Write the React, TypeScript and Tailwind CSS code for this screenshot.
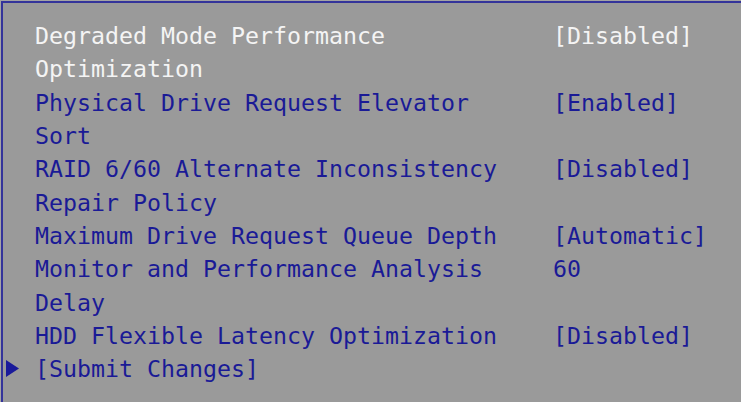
import React from 'react';

type Setting = {
  label: string;
  value?: string;
  selected?: boolean;
  action?: boolean;
};

const settings: Setting[] = [
  { label: 'Degraded Mode Performance Optimization', value: '[Disabled]', selected: true },
  { label: 'Physical Drive Request Elevator Sort', value: '[Enabled]' },
  { label: 'RAID 6/60 Alternate Inconsistency Repair Policy', value: '[Disabled]' },
  { label: 'Maximum Drive Request Queue Depth', value: '[Automatic]' },
  { label: 'Monitor and Performance Analysis Delay', value: '60' },
  { label: 'HDD Flexible Latency Optimization', value: '[Disabled]' },
  { label: '[Submit Changes]', action: true },
];

const SubmenuArrow: React.FC = () => (
  <svg width="13" height="17" viewBox="0 0 13 17" className="mt-[8px] ml-[3px]" aria-hidden="true">
    <polygon points="0,0 13,8.5 0,17" fill="#1a1a9a" />
  </svg>
);

const SettingRow: React.FC<{ item: Setting }> = ({ item }) => {
  const color = item.selected ? 'text-[#f4f4f4]' : 'text-[#1a1a96]';
  return (
    <div className={`grid grid-cols-[32px_518px_1fr] ${color}`}>
      <div>{item.action && <SubmenuArrow />}</div>
      <div className="pr-[42px]">{item.label}</div>
      <div>{item.value}</div>
    </div>
  );
};

export default function App() {
  return (
    <div className="w-[741px] h-[402px] overflow-hidden bg-[#a4a4a4] pt-px pl-px">
      <div
        className="h-full border-t-2 border-l-2 border-[#34349a] bg-[#9a9a9a] pt-[16px] text-[23.25px] leading-[33.33px]"
        style={{ fontFamily: '"DejaVu Sans Mono", "Liberation Mono", monospace' }}
      >
        {settings.map((s, i) => (
          <SettingRow key={i} item={s} />
        ))}
      </div>
    </div>
  );
}
